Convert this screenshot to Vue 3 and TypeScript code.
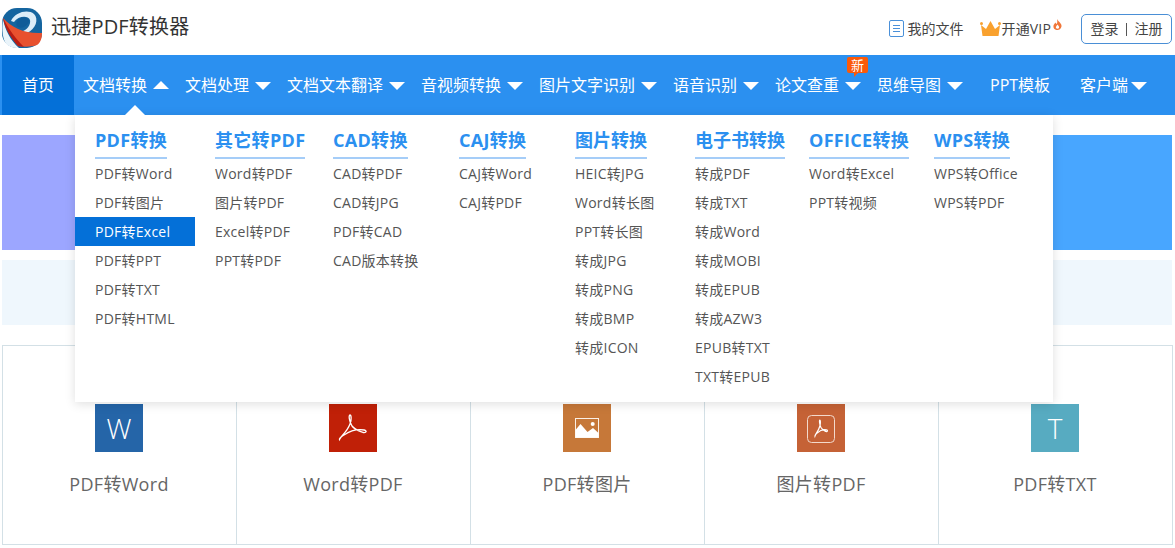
<script setup lang="ts">
interface NavItem { label: string; w: number; caret?: 'up' | 'down'; hot?: boolean }
const nav: NavItem[] = [
  { label: '文档转换', w: 102, caret: 'up' },
  { label: '文档处理', w: 102, caret: 'down' },
  { label: '文档文本翻译', w: 134, caret: 'down' },
  { label: '音视频转换', w: 118, caret: 'down' },
  { label: '图片文字识别', w: 134, caret: 'down' },
  { label: '语音识别', w: 102, caret: 'down' },
  { label: '论文查重', w: 102, caret: 'down', hot: true },
  { label: '思维导图', w: 113, caret: 'down' },
  { label: 'PPT模板', w: 90 },
  { label: '客户端', w: 95, caret: 'down' },
]
interface Col { title: string; items: string[] }
const cols: Col[] = [
  { title: 'PDF转换', items: ['PDF转Word', 'PDF转图片', 'PDF转Excel', 'PDF转PPT', 'PDF转TXT', 'PDF转HTML'] },
  { title: '其它转PDF', items: ['Word转PDF', '图片转PDF', 'Excel转PDF', 'PPT转PDF'] },
  { title: 'CAD转换', items: ['CAD转PDF', 'CAD转JPG', 'PDF转CAD', 'CAD版本转换'] },
  { title: 'CAJ转换', items: ['CAJ转Word', 'CAJ转PDF'] },
  { title: '图片转换', items: ['HEIC转JPG', 'Word转长图', 'PPT转长图', '转成JPG', '转成PNG', '转成BMP', '转成ICON'] },
  { title: '电子书转换', items: ['转成PDF', '转成TXT', '转成Word', '转成MOBI', '转成EPUB', '转成AZW3', 'EPUB转TXT', 'TXT转EPUB'] },
  { title: 'OFFICE转换', items: ['Word转Excel', 'PPT转视频'] },
  { title: 'WPS转换', items: ['WPS转Office', 'WPS转PDF'] },
]
const isCjk = (s: string): boolean => !/[A-Za-z]/.test(s)
const cards = [
  { label: 'PDF转Word', kind: 'word' },
  { label: 'Word转PDF', kind: 'pdf' },
  { label: 'PDF转图片', kind: 'img' },
  { label: '图片转PDF', kind: 'imgpdf' },
  { label: 'PDF转TXT', kind: 'txt' },
]
const acrobat = 'M10.500 35.500 C12 32 18 28 21 20 C23 15 22 11 21 11 C19.500 11 20 17 23 22 C26 26 30 27 34 28.500 C38 29 38 26.500 35 26 C29 25 21 27 15 31 C12 33 10 34 10.500 35.500 Z'
</script>

<template>
  <div class="page">
    <header class="top">
      <div class="brand">
        <svg class="logo" width="40" height="40" viewBox="0 0 40 40">
          <rect width="40" height="40" rx="15" fill="#15659f" />
          <path d="M1 11 C3 22 9 33 17 40 C10 40 5 38 3 34 C0 28 0 18 1 11 Z" fill="#eaf4fa" />
          <path d="M9 13 C13 4 26 1 32 6 C37 11 34 21 25 25 L19 24 C25 22 29 17 28 12 C26 7 16 8 12 14 Z" fill="#dcedf8" />
          <path d="M15 13 C19 8 27 9 27 13 C26 18 20 21 16 19 C14 18 14 15 15 13 Z" fill="#0f5c98" />
          <path d="M1 10 C10 20 23 26 40 25 C40 31 38 35 35 37 C29 39 23 39 16 38 C10 30 4 21 1 10 Z" fill="#e8512f" />
          <path d="M1 10 C7 22 14 31 22 39 L16 38 C9 30 3 21 1 10 Z" fill="#b81d14" />
        </svg>
        <span class="brand-name">迅捷PDF转换器</span>
      </div>
      <div class="top-right">
        <a class="files">
          <svg width="15" height="17" viewBox="0 0 15 17" fill="none" stroke="#4a90d9" stroke-width="1">
            <rect x="0.500" y="0.500" width="14" height="16" rx="1.500" />
            <path d="M4 5.500h7M4 8.500h7M4 11.500h7" />
          </svg>
          我的文件
        </a>
        <a class="vip">
          <svg width="21" height="17" viewBox="0 0 21 17">
            <path d="M1 5 L6 9 L10.500 1 L15 9 L20 5 L18.500 16 H2.500 Z" fill="#f9a12e" />
            <circle cx="1.500" cy="3.500" r="1.500" fill="#f9a12e" />
            <circle cx="19.500" cy="3.500" r="1.500" fill="#f9a12e" />
          </svg>
          <span>开通VIP</span>
          <svg class="flame" width="9" height="11" viewBox="0 0 9 11">
            <path d="M4.500 0 C5 3 9 4 8.500 7.500 C8 10 6 11 4.500 11 C2 11 0 9.500 0.500 6.500 C1 5 2 4 2.500 3.500 C3 5 3.500 5 4 4.500 C4.500 3 4 1.500 4.500 0 Z" fill="#f0773a" />
            <path d="M4.500 5.500 C5.500 7 6.500 7.500 6 9 C5.500 10 3.500 10 3 9 C2.500 8 3.500 7 4.500 5.500 Z" fill="#fff" />
          </svg>
        </a>
        <a class="login"><span>登录</span><i></i><span>注册</span></a>
      </div>
    </header>

    <nav class="nav">
      <a class="home">首页</a>
      <a v-for="n in nav" :key="n.label" class="nav-item" :style="{ width: n.w + 'px' }">
        <span class="nav-label">{{ n.label }}</span>
        <span v-if="n.caret" class="caret" :class="n.caret"></span>
        <span v-if="n.hot" class="hot">新</span>
      </a>
    </nav>

    <main class="main">
      <div class="banner"><div class="banner-left"></div><div class="banner-right"></div></div>
      <div class="strip"></div>
      <div class="cards">
        <div v-for="c in cards" :key="c.label" class="card">
          <div class="card-icon" :class="c.kind">
            <span v-if="c.kind === 'word'" class="glyph">W</span>
            <span v-else-if="c.kind === 'txt'" class="glyph">T</span>
            <svg v-else-if="c.kind === 'pdf'" width="48" height="48" viewBox="0 0 48 48">
              <path :d="acrobat" fill="none" stroke="#fff" stroke-width="1.300" />
            </svg>
            <svg v-else-if="c.kind === 'img'" width="48" height="48" viewBox="0 0 48 48">
              <rect x="12.500" y="14.500" width="23" height="19" fill="none" stroke="#fbf0e6" stroke-width="1" />
              <path d="M12.500 33.500 V26 L17.500 20 L24.500 28 L30 24 L35.500 29 V33.500 Z" fill="#fff" />
              <circle cx="29.700" cy="20" r="2" fill="#fff" />
            </svg>
            <svg v-else width="48" height="48" viewBox="0 0 48 48">
              <rect x="10.500" y="11.500" width="27" height="27" rx="4" fill="none" stroke="#f3d9cb" stroke-width="1" />
              <g transform="translate(13 9) scale(0.47 0.65)">
                <path :d="acrobat" fill="none" stroke="#fff" stroke-width="1.200" vector-effect="non-scaling-stroke" />
              </g>
            </svg>
          </div>
          <p class="card-label">{{ c.label }}</p>
        </div>
      </div>
    </main>

    <section class="drop">
      <span class="drop-arrow"></span>
      <div v-for="c in cols" :key="c.title" class="col">
        <div class="col-head"><h3 :class="{ cjk: isCjk(c.title) }">{{ c.title }}</h3></div>
        <a v-for="i in c.items" :key="i" class="link" :class="{ on: i === 'PDF转Excel' }">{{ i }}</a>
      </div>
    </section>
  </div>
</template>

<style>
html, body { margin: 0; background: #fff; overflow: hidden; }
</style>

<style scoped>
.page {
  position: relative;
  width: 1175px;
  height: 548px;
  overflow: hidden;
  font-family: "Open Sans", "Noto Sans CJK SC", sans-serif;
  color: #333;
}
.top { height: 55px; display: flex; justify-content: space-between; align-items: center; }
.brand { display: flex; align-items: center; padding-left: 2px; }
.logo { display: block; margin-top: 1px; }
.brand-name { margin-left: 9px; margin-top: -2px; font-size: 20px; color: #333; line-height: 28px; letter-spacing: .2px; }
.top-right { display: flex; align-items: center; height: 30px; margin-top: 3px; padding-right: 3px; }
.files { display: flex; align-items: center; gap: 4px; margin-top: -2px; color: #444; font-size: 14px; }
.vip { display: flex; align-items: center; margin-left: 16px; margin-top: -2px; color: #444; font-size: 14px; }
.vip span { margin-left: 1px; letter-spacing: .15px; }
.flame { margin: -8px 0 0 2px; }
.login {
  display: flex; align-items: center; justify-content: center;
  box-sizing: border-box; width: 91px; height: 30px; margin-left: 19px; padding-bottom: 2px;
  border: 1px solid #4a8fd6; border-radius: 5px; color: #444; font-size: 14px;
}
.login i { width: 1px; height: 13px; background: #555; margin: 2px 8px 0 7px; }
.nav { height: 60px; background: #2b90f0; display: flex; align-items: stretch; padding-left: 2px; }
.home {
  box-sizing: border-box; width: 72px; padding-bottom: 2px; background: #0470d8; color: #fff;
  display: flex; align-items: center; justify-content: center; font-size: 16px;
}
.nav-item {
  position: relative; box-sizing: border-box; padding-left: 9px;
  display: flex; align-items: center; color: #fff; font-size: 16px;
}
.nav-label { margin-top: -2px; white-space: nowrap; }
.caret { width: 0; height: 0; margin-left: 6px; border-left: 8px solid transparent; border-right: 8px solid transparent; }
.caret.down { border-top: 8px solid #fff; margin-top: 1px; }
.caret.up { border-bottom: 8px solid #fff; margin-top: -1px; }
.nav-item:last-child .caret { margin-left: 3px; }
.hot {
  position: absolute; left: 81px; top: 2px; width: 21px; height: 16px;
  background: #fb5a0a; color: #fff; font-size: 13px; line-height: 16px; text-align: center; border-radius: 2px;
}
.hot::after {
  content: ""; position: absolute; left: 7px; top: 16px;
  border-left: 4px solid #fb5a0a; border-right: 2px solid transparent; border-bottom: 4px solid transparent;
}
.main { padding: 20px 3px 0 2px; }
.banner { height: 115px; display: flex; }
.banner-left { flex: 1; background: #9ca6ff; }
.banner-right { flex: 1; background: #48a6ff; }
.strip { height: 65px; margin-top: 10px; background: #eff7fd; }
.cards {
  box-sizing: border-box; margin-top: 20px; width: 1171px; height: 200px; display: grid;
  grid-template-columns: repeat(5, 234px); border: 1px solid #d3e0e6; border-right: 0;
}
.card { border-right: 1px solid #d3e0e6; text-align: center; padding: 58px 1px 0 0; }
.card-icon {
  width: 48px; height: 48px; margin: 0 auto; display: flex; align-items: center; justify-content: center;
}
.word { background: #2565a8; }
.pdf { background: #c02007; }
.img { background: #c67839; }
.imgpdf { background: #c56236; }
.txt { background: #57abc1; }
.glyph { color: #fff; font-size: 28px; font-weight: 300; line-height: 48px; font-family: "Open Sans", sans-serif; }
.card-label { margin: 19px 0 0; font-size: 18px; line-height: 26px; color: #666; letter-spacing: .3px; }
.drop {
  position: absolute; left: 75px; top: 115px; width: 978px; height: 287px; background: #fff;
  box-shadow: 0 2px 10px rgba(0, 0, 0, .13); display: grid;
  grid-template-columns: 120px 118px 126px 116px 120px 114px 125px 1fr;
  padding-top: 10px; box-sizing: border-box;
}
.drop-arrow {
  position: absolute; left: 50px; top: -10px; width: 0; height: 0;
  border-left: 10px solid transparent; border-right: 10px solid transparent; border-bottom: 10px solid #fff;
}
.col-head { padding-left: 20px; }
.col-head h3 {
  display: inline-block; vertical-align: top; margin: 0; height: 32px; line-height: 30px; font-size: 18px; font-weight: 700; color: #2b90f0;
  border-bottom: 2px solid #a5cdf8; letter-spacing: .3px;
}
.col-head h3.cjk { letter-spacing: 0; }
.link {
  display: block; height: 29px; line-height: 29px; padding-left: 20px; font-size: 14px; color: #555; white-space: nowrap; letter-spacing: .25px;
}
.link.on { background: #0470d8; color: #fff; }
</style>
